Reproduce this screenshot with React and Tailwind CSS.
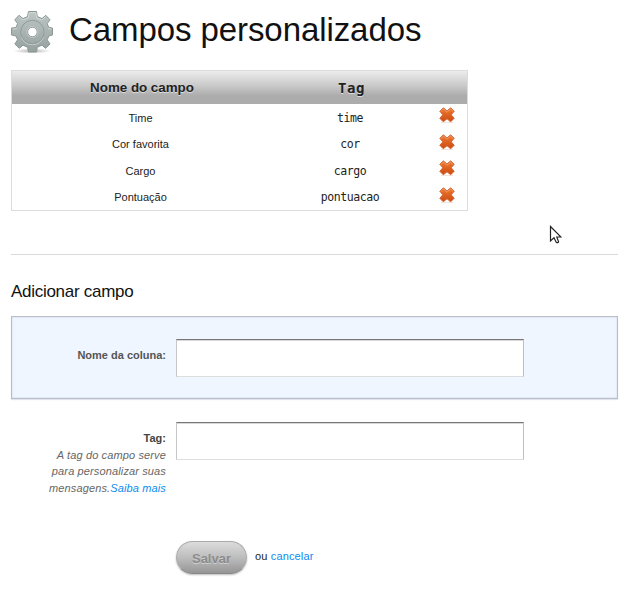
const rows = [
  ['Time', 'time'],
  ['Cor favorita', 'cor'],
  ['Cargo', 'cargo'],
  ['Pontuação', 'pontuacao'],
];

function Gear() {
  return (
    <svg width="44" height="44" viewBox="0 0 44 44" className="mt-[10px] ml-[-1px] shrink-0">
      <defs>
        <linearGradient id="gear" x1="0" y1="0" x2="0" y2="1">
          <stop offset="0" stopColor="#bec7c5" />
          <stop offset="1" stopColor="#95a19f" />
        </linearGradient>
        <radialGradient id="floor">
          <stop offset="0" stopColor="#777" stopOpacity=".55" />
          <stop offset="1" stopColor="#777" stopOpacity="0" />
        </radialGradient>
      </defs>
      <ellipse cx="22" cy="41" rx="19" ry="2.6" fill="url(#floor)" />
      <g fill="url(#gear)" stroke="#8c9896" strokeWidth="1" strokeLinejoin="round" fillRule="evenodd">
        <path d="M18.5 1.5H26.5L27.3 6.6L32 8.6L35.8 5.3L40 9.8L37.2 13.6L38.8 17.5L42.5 18V25L38.8 26L37.2 29.8L40 34L35.5 38.3L32 35.2L27.3 37.2L26.5 42H18.5L17.5 37.2L13 35.2L9.3 38.3L4.8 34L7.6 29.8L6 26L1.5 25V18L6 17.5L7.6 13.6L4.8 9.8L9 5.3L13 8.6L17.5 6.6ZM22.4 17.2A4.8 4.8 0 1 0 22.4 26.8A4.8 4.8 0 1 0 22.4 17.2Z" />
      </g>
      <path d="M19.2 2.7H25.8M9.2 6.7L13 10L18.3 7.8L19.2 2.7M25.8 2.7L26.6 7.8L31.9 10L35.7 6.7M2.7 19L6.8 18.6M38 18.6L41.3 19" fill="none" stroke="#d3dad8" strokeWidth=".9" />
      <path d="M11.3 26.4A12 12 0 0 0 33.5 26.4" fill="none" stroke="#c6cecc" strokeWidth="1" transform="translate(0 .8)" />
      <circle cx="22.4" cy="22" r="11.7" fill="none" stroke="#8b9896" strokeWidth=".9" />
      <circle cx="22.4" cy="22" r="5.6" fill="none" stroke="#c3ccca" strokeWidth=".8" />
    </svg>
  );
}

function Cross() {
  return (
    <svg width="16" height="16" viewBox="0 0 16 16" className="mx-auto block">
      <defs>
        <linearGradient id="cross" x1="0" y1="0" x2="0" y2="1">
          <stop offset="0" stopColor="#ec7e3a" />
          <stop offset=".5" stopColor="#df6220" />
          <stop offset="1" stopColor="#cb4a12" />
        </linearGradient>
      </defs>
      <path d="M2 15.5H14" stroke="#f3e3dc" />
      <path d="M4.3 .8L8 3.9L11.7 .8L15.2 4.3L12.2 7.8L15.2 11.3L11.7 14.8L8 11.8L4.3 14.8L.8 11.3L3.8 7.8L.8 4.3Z" fill="url(#cross)" stroke="#cf6029" strokeWidth=".9" strokeLinejoin="round" />
      <path d="M2.1 4.3L4.4 2.1L8 5.2L11.6 2.1L13.9 4.3" fill="none" stroke="#f5a574" strokeWidth=".8" />
    </svg>
  );
}

function Field() {
  return (
    <input
      type="text"
      className="block h-[38px] w-[348px] shrink-0 border border-t-[#777] border-r-[#bfbfbf] border-b-[#dedede] border-l-[#c6c6c6] bg-white px-2 shadow-[inset_0_1px_0_#d8d8d8] outline-none"
    />
  );
}

export default function App() {
  return (
    <div className="relative h-[594px] w-[630px] overflow-hidden bg-white pr-3 pl-[11px] font-['Liberation_Sans',Arial,sans-serif] text-[11px] text-[#222]">
      <header className="flex h-[70px]">
        <Gear />
        <h1 className="mt-[10px] ml-[15px] text-[33px] leading-[40px] tracking-[-0.08px] whitespace-nowrap text-[#111]">Campos personalizados</h1>
      </header>

      <table className="h-[141px] w-[457px] table-fixed border-separate border-spacing-0 border border-[#dcdcdc] text-center">
        <colgroup>
          <col className="w-[257px]" />
          <col className="w-[161px]" />
          <col className="w-[37px]" />
        </colgroup>
        <thead>
          <tr className="h-[33px] bg-linear-to-b from-[#ececec] via-[#c9c9c9] via-45% to-[#acacac] to-75%">
            <th className="p-0 pt-[1px] pl-[3px] text-[13.4px] tracking-[-0.03px] [text-shadow:0_1px_0_#ddd]">Nome do campo</th>
            <th className="p-0 pt-[1px] pl-[4px] font-['DejaVu_Sans_Mono',monospace] text-[14px] tracking-[0.6px] [text-shadow:0_1px_0_#ddd]">Tag</th>
            <th className="p-0" />
          </tr>
        </thead>
        <tbody>
          {rows.map(([name, tag]) => (
            <tr key={tag} className="h-[26.5px]">
              <td className="p-0 pt-[0.75px] leading-4">{name}</td>
              <td className="p-0 pt-[1px] pl-[1px] font-['DejaVu_Sans_Mono',monospace] text-[11.5px] leading-4 tracking-[-0.45px]">{tag}</td>
              <td className="p-0 pr-[4px] pb-1"><Cross /></td>
            </tr>
          ))}
        </tbody>
      </table>

      <hr className="mt-[43px] border-t border-[#dadada]" />
      <h2 className="mt-[25px] h-6 text-[17px] leading-6 tracking-[-0.28px] text-[#111]">Adicionar campo</h2>

      <form>
        <div className="mt-[12px] flex h-[83px] border border-[#b9bfca] bg-[#eff6ff] pt-[22px] shadow-[inset_0_0_2px_#c5cedb,0_1px_1px_#e2e6ec]">
          <label className="mr-[10px] w-[154px] pt-[8px] text-right leading-4 font-bold text-[#555]">Nome da coluna:</label>
          <Field />
        </div>
        <div className="mt-[23px] flex h-[119px]">
          <div className="mr-[10px] w-[155px] pt-[8px] text-right leading-[16.5px] text-[#666]">
            <label className="block font-bold text-[#444]">Tag:</label>
            <p className="tracking-[0.13px] whitespace-nowrap italic">
              A tag do campo serve<br />para personalizar suas<br />mensagens.<a className="text-[#0b8cf0]">Saiba mais</a>
            </p>
          </div>
          <Field />
        </div>
        <div className="ml-[165px] flex items-start">
          <button
            type="button"
            className="h-[33px] w-[71px] rounded-full border border-[#aaa] border-b-[#888] bg-linear-to-b from-[#dcdcdc] via-[#bdbdbd] to-[#969696] pt-[2px] text-[13px] font-bold text-[#8c8c8c] shadow-[0_1px_2px_#bbb] [text-shadow:0_1px_0_#d0d0d0]"
          >
            Salvar
          </button>
          <span className="mt-[7px] ml-[8px] leading-4 tracking-[0.15px]">ou <a className="text-[#0b8cf0]">cancelar</a></span>
        </div>
      </form>

      <svg width="13" height="20" viewBox="0 0 13 20" className="absolute top-[225px] left-[549px]">
        <path d="M1.5 1.5V16L5 12.8L7.2 17.2Q8.5 18.3 9.6 16.8L7.8 12H12Z" fill="#fff" stroke="#222" strokeWidth="1.2" />
      </svg>
    </div>
  );
}
